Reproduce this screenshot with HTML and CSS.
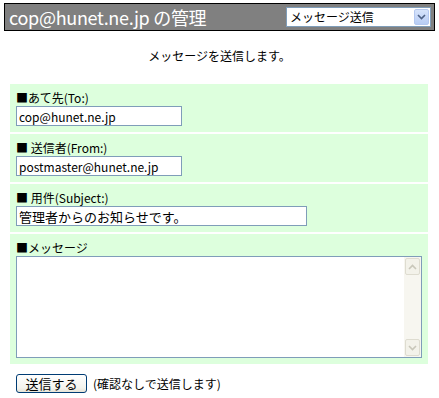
FILE: index.html
```html
<!DOCTYPE html>
<html lang="ja">
<head>
  <meta charset="UTF-8">
  <title>cop@hunet.ne.jp の管理</title>
  <link rel="stylesheet" href="styles.css">
</head>
<body>
  <div class="title-bar">
    <span class="title-text">cop@hunet.ne.jp の管理</span>
    <div class="menu-select">
      <span class="menu-value">メッセージ送信</span>
      <span class="menu-arrow">
        <svg width="9" height="6" viewBox="0 0 9 6"><path d="M1 1 L4.5 4.5 L8 1" fill="none" stroke="#4d6185" stroke-width="1.6"/></svg>
      </span>
    </div>
  </div>

  <p class="notice">メッセージを送信します。</p>

  <form class="mail-form">
    <div class="field-box">
      <label class="field-label">■あて先(To:)</label>
      <input class="text-input" type="text" value="cop@hunet.ne.jp">
    </div>
    <div class="field-box">
      <label class="field-label">■ 送信者(From:)</label>
      <input class="text-input" type="text" value="postmaster@hunet.ne.jp">
    </div>
    <div class="field-box">
      <label class="field-label">■ 用件(Subject:)</label>
      <input class="text-input wide" type="text" value="管理者からのお知らせです。">
    </div>
    <div class="field-box">
      <label class="field-label">■メッセージ</label>
      <div class="message-area">
        <textarea class="message-text"></textarea>
        <div class="scroll-bar">
          <span class="scroll-btn">
            <svg width="9" height="6" viewBox="0 0 9 6"><path d="M1 5 L4.5 1.5 L8 5" fill="none" stroke="#c9c7ba" stroke-width="1.6"/></svg>
          </span>
          <span class="scroll-btn">
            <svg width="9" height="6" viewBox="0 0 9 6"><path d="M1 1 L4.5 4.5 L8 1" fill="none" stroke="#c9c7ba" stroke-width="1.6"/></svg>
          </span>
        </div>
      </div>
    </div>
    <div class="send-row">
      <button class="send-button" type="button">送信する</button>
      <span class="send-note">(確認なしで送信します)</span>
    </div>
  </form>
</body>
</html>
```

FILE: styles.css
```css
body {
  margin: 0;
  padding: 3px 4px 0 4px;
  font-family: "Noto Sans CJK JP", "DejaVu Sans", sans-serif;
  font-size: 12px;
  color: #000;
  background: #fff;
}

.title-bar {
  height: 26px;
  border: 1px solid #000;
  background: #808080;
  display: flex;
  align-items: center;
  justify-content: space-between;
  padding: 0 3px 0 4px;
}

.title-text {
  color: #fff;
  font-size: 18px;
  line-height: 26px;
  letter-spacing: -0.3px;
}

.menu-select {
  width: 143px;
  height: 18px;
  background: #fff;
  border: 1px solid #7f9db9;
  display: flex;
  align-items: center;
  justify-content: space-between;
}

.menu-value {
  padding-left: 3px;
  font-size: 12px;
  line-height: 18px;
}

.menu-arrow {
  width: 15px;
  height: 16px;
  margin-right: 1px;
  background: linear-gradient(#d6e3fb, #b8cdf5);
  border: 1px solid #b4c8f0;
  box-sizing: border-box;
  border-radius: 2px;
  display: flex;
  align-items: center;
  justify-content: center;
}

.notice {
  margin: 17px 0 0 0;
  text-align: center;
  line-height: 16px;
  height: 36px;
}

.mail-form {
  margin: 0 7px 0 6px;
  display: flex;
  flex-direction: column;
  gap: 2px;
}

.field-box {
  background: #ddffdd;
  padding: 6px;
  display: flex;
  flex-direction: column;
  align-items: flex-start;
}

.field-label {
  line-height: 16px;
  height: 16px;
}

.text-input {
  width: 166px;
  height: 20px;
  box-sizing: border-box;
  border: 1px solid #7f9db9;
  padding: 0 2px;
  font-family: inherit;
  font-size: 12px;
  outline: none;
}

.text-input.wide {
  width: 291px;
  font-size: 13px;
}

.field-box:last-of-type {
  padding-bottom: 7px;
}

.message-area {
  width: 406px;
  height: 102px;
  box-sizing: border-box;
  border: 1px solid #7f9db9;
  background: #fff;
  display: flex;
}

.message-text {
  flex: 1;
  border: none;
  resize: none;
  outline: none;
  font-family: inherit;
}

.scroll-bar {
  width: 17px;
  background: #f7f6f0;
  display: flex;
  flex-direction: column;
  justify-content: space-between;
  padding: 1px;
  box-sizing: border-box;
}

.scroll-btn {
  height: 15px;
  background: #f3f2ea;
  border: 1px solid #dedcd0;
  border-radius: 2px;
  display: flex;
  align-items: center;
  justify-content: center;
}

.send-row {
  display: flex;
  align-items: center;
  gap: 6px;
  padding: 8px 0 0 6px;
}

.send-button {
  width: 71px;
  height: 19px;
  padding: 0;
  border: 1px solid #003c74;
  border-radius: 3px;
  background: linear-gradient(#ffffff, #f4f4ee 75%, #e6e3d6);
  font-family: inherit;
  font-size: 13px;
  line-height: 16px;
}

.send-note {
  font-size: 12px;
}
```
